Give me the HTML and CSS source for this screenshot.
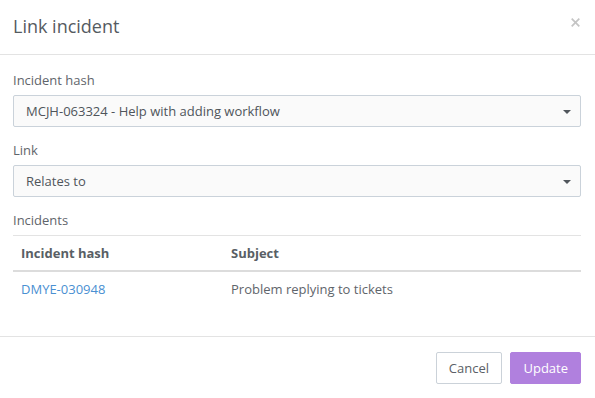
FILE: index.html
```html
<!DOCTYPE html>
<html>
<head>
<meta charset="utf-8">
<link rel="stylesheet" href="styles.css">
</head>
<body>
<div class="modal">
  <div class="modal-header">
    <h4 class="modal-title">Link incident</h4>
    <button class="close" aria-label="Close">
      <svg width="9" height="9" viewBox="0 0 9 9"><path d="M0.7 0.7L8.3 8.3M8.3 0.7L0.7 8.3" stroke="#c4c4c4" stroke-width="1.7" fill="none"/></svg>
    </button>
  </div>
  <div class="modal-body">
    <label class="field-label">Incident hash</label>
    <div class="select">
      <span class="select-value">MCJH-063324 - Help with adding workflow</span>
      <span class="caret"></span>
    </div>
    <label class="field-label">Link</label>
    <div class="select">
      <span class="select-value">Relates to</span>
      <span class="caret"></span>
    </div>
    <label class="field-label">Incidents</label>
    <table class="table">
      <thead>
        <tr><th class="col-hash">Incident hash</th><th>Subject</th></tr>
      </thead>
      <tbody>
        <tr><td class="col-hash"><a class="link" href="#">DMYE-030948</a></td><td>Problem replying to tickets</td></tr>
      </tbody>
    </table>
  </div>
  <div class="modal-footer">
    <button class="btn btn-default">Cancel</button>
    <button class="btn btn-primary">Update</button>
  </div>
</div>
</body>
</html>
```

FILE: styles.css
```css
html, body {
  margin: 0;
  padding: 0;
  background: #ffffff;
}
body {
  font-family: "Open Sans", "Noto Sans", sans-serif;
  font-size: 13px;
  color: #5a6066;
}
.modal {
  width: 595px;
  background: #fff;
}
.modal-header {
  height: 54px;
  border-bottom: 1px solid #e3e3e3;
  display: flex;
  align-items: center;
  justify-content: space-between;
  padding: 0 15px 0 13px;
  box-sizing: content-box;
}
.modal-title {
  margin: 0;
  font-size: 18px;
  font-weight: 400;
  color: #555b61;
  line-height: 24px;
  padding-bottom: 2px;
}
.close {
  border: 0;
  background: none;
  padding: 0;
  width: 9px;
  height: 9px;
  display: flex;
  margin-top: -10px;
}
.modal-body {
  padding: 15px 14px 15px 13px;
  display: flex;
  flex-direction: column;
}
.field-label {
  display: block;
  line-height: 20px;
  margin-bottom: 5px;
  color: #5f656b;
}
.select {
  height: 32px;
  box-sizing: border-box;
  border: 1px solid #cad2da;
  border-radius: 2px;
  background: #fafafa;
  display: flex;
  align-items: center;
  justify-content: space-between;
  padding: 0 9px 0 12px;
  margin-bottom: 13px;
  color: #4f555b;
}
.caret {
  width: 0;
  height: 0;
  border-left: 4px solid transparent;
  border-right: 4px solid transparent;
  border-top: 4px solid #50565c;
  margin-top: 1px;
}
.table {
  width: 100%;
  border-collapse: collapse;
  border-top: 1px solid #e3e3e3;
  margin-bottom: 15px;
}
.table th, .table td {
  text-align: left;
  padding: 8px 8px;
  line-height: 18px;
}
.table th {
  font-weight: 700;
  color: #595f65;
  border-bottom: 2px solid #dcdcdc;
}
.table td {
  color: #5f656b;
}
.col-hash {
  width: 194px;
}
.link {
  color: #4a90d2;
  text-decoration: none;
}
.modal-footer {
  border-top: 1px solid #e3e3e3;
  padding: 15px 14px 15px 13px;
  display: flex;
  justify-content: flex-end;
  gap: 8px;
}
.btn {
  font-family: "Open Sans", "Noto Sans", sans-serif;
  font-size: 13px;
  height: 32px;
  line-height: 18px;
  padding: 0 11px;
  border-radius: 2px;
  cursor: pointer;
}
.btn-default {
  background: #fff;
  border: 1px solid #cbd2d9;
  color: #5a6066;
  padding: 0 12px 0 11px;
  min-width: 66px;
}
.btn-primary {
  background: #b080de;
  border: 1px solid #b080de;
  color: #fff;
  padding: 0 12px;
}
```
